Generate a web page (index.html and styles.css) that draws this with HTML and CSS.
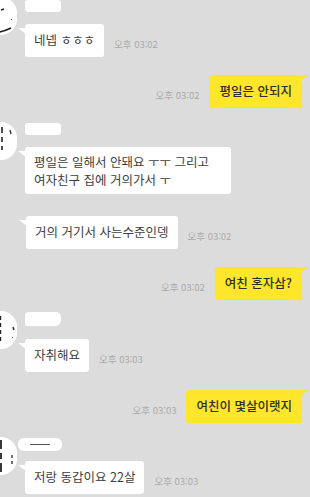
FILE: index.html
```html
<!DOCTYPE html>
<html lang="ko">
<head>
    <meta charset="UTF-8">
    <meta name="viewport" content="width=device-width, initial-scale=1.0">
    <title>채팅</title>
    <link rel="stylesheet" href="styles.css">
</head>
<body>
    <div class="chat">
        <div class="msg group first">
            <div class="avatar">
                <svg viewBox="0 0 36 38" width="36" height="38">
                    <rect x="0" y="0" width="36" height="38" rx="16" fill="#fff"/>
                    <path d="M20 13 l3 -1" stroke="#222" stroke-width="1.6"/>
                    <path d="M30 22 l1 1" stroke="#555" stroke-width="1"/>
                    <path d="M18 35 q6 -1 12 -4" stroke="#222" stroke-width="1.8" fill="none"/>
                </svg>
            </div>
            <div class="body">
                <div class="name"></div>
                <div class="line">
                    <div class="bubble">네넵 ㅎㅎㅎ</div>
                    <span class="time">오후 03:02</span>
                </div>
            </div>
        </div>

        <div class="msg out">
            <div class="line">
                <span class="time">오후 03:02</span>
                <div class="bubble">평일은 안되지</div>
            </div>
        </div>

        <div class="msg group">
            <div class="avatar">
                <svg viewBox="0 0 36 38" width="36" height="38">
                    <rect x="0" y="0" width="36" height="38" rx="16" fill="#fff"/>
                    <path d="M21 5 v6 M21 15 v5 M21 24 v4" stroke="#222" stroke-width="1.6"/>
                    <path d="M29 8 l1 4" stroke="#333" stroke-width="1.4"/>
                </svg>
            </div>
            <div class="body">
                <div class="name"></div>
                <div class="line">
                    <div class="bubble wide">평일은 일해서 안돼요 ㅜㅜ 그리고 여자친구 집에 거의가서 ㅜ</div>
                </div>
            </div>
        </div>

        <div class="msg in cont">
            <div class="line">
                <div class="bubble">거의 거기서 사는수준인뎅</div>
                <span class="time">오후 03:02</span>
            </div>
        </div>

        <div class="msg out">
            <div class="line">
                <span class="time">오후 03:02</span>
                <div class="bubble">여친 혼자삼?</div>
            </div>
        </div>

        <div class="msg group tight">
            <div class="avatar">
                <svg viewBox="0 0 36 38" width="36" height="38">
                    <rect x="0" y="0" width="36" height="38" rx="16" fill="#fff"/>
                    <path d="M19.5 5 v28" stroke="#222" stroke-width="1.4" stroke-dasharray="4 3"/>
                    <path d="M32 16 l1 3" stroke="#333" stroke-width="1.6"/>
                    <path d="M31 26 l1 1" stroke="#666" stroke-width="1"/>
                </svg>
            </div>
            <div class="body">
                <div class="name tall"></div>
                <div class="line">
                    <div class="bubble">자취해요</div>
                    <span class="time">오후 03:03</span>
                </div>
            </div>
        </div>

        <div class="msg out">
            <div class="line">
                <span class="time">오후 03:03</span>
                <div class="bubble">여친이 몇살이랫지</div>
            </div>
        </div>

        <div class="msg group">
            <div class="avatar">
                <svg viewBox="0 0 36 38" width="36" height="38">
                    <rect x="0" y="0" width="36" height="38" rx="16" fill="#fff"/>
                    <path d="M20 3 v9 M20 16 v6 M20 26 v9" stroke="#222" stroke-width="1.8"/>
                    <path d="M31 18 v11" stroke="#333" stroke-width="1.4" stroke-dasharray="3 3"/>
                </svg>
            </div>
            <div class="body">
                <div class="name scribble"></div>
                <div class="line">
                    <div class="bubble">저랑 동갑이요 22살</div>
                    <span class="time">오후 03:03</span>
                </div>
            </div>
        </div>
    </div>
</body>
</html>
```

FILE: styles.css
```css
* {
    margin: 0;
    padding: 0;
    box-sizing: border-box;
}

body {
    font-family: "Noto Sans CJK KR", "Noto Sans", sans-serif;
    background: #dcdcdc;
    color: #3e3e3e;
    overflow: hidden;
    height: 100vh;
}

.chat {
    display: flex;
    flex-direction: column;
    padding-right: 8px;
}

.msg {
    margin-top: 18px;
}

.msg.first {
    margin-top: 0;
}

.msg.cont {
    margin-top: 22px;
}

.msg.tight {
    margin-top: 12px;
}

.msg.group {
    display: flex;
    gap: 8px;
}

.msg.group:not(.first):not(.tight) {
    margin-top: 15px;
}

.msg.in {
    padding-left: 26px;
}

.avatar {
    width: 36px;
    height: 38px;
    margin-left: -19px;
    margin-top: -1px;
    flex-shrink: 0;
}

.avatar svg {
    display: block;
}

.msg.first .avatar {
    margin-top: -3px;
}

.body {
    display: flex;
    flex-direction: column;
}

.name {
    width: 36px;
    height: 12px;
    background: #fff;
    border-radius: 3px;
    margin-bottom: 12px;
}

.name.tall {
    height: 14px;
    margin-bottom: 13px;
    border-radius: 4px 5px 6px 2px;
}

.name.scribble {
    width: 44px;
    height: 13px;
    margin-left: -7px;
    margin-bottom: 10px;
    border-radius: 6px;
    position: relative;
}

.name.scribble::after {
    content: '';
    position: absolute;
    left: 12px;
    top: 6px;
    width: 20px;
    height: 1px;
    background: #555;
}

.line {
    display: flex;
    align-items: flex-end;
    gap: 10px;
}

.msg.out .line {
    justify-content: flex-end;
}

.bubble {
    position: relative;
    background: #fff;
    border-radius: 3px;
    padding: 7px 9px 8px;
    font-size: 12.5px;
    line-height: 18px;
    white-space: nowrap;
}

.bubble.wide {
    white-space: normal;
    word-break: keep-all;
    max-width: 206px;
    padding: 6px 9px 5px;
}

.bubble::before {
    content: '';
    position: absolute;
    top: 4px;
    left: -7px;
    width: 8px;
    height: 6px;
    background: #fff;
    clip-path: polygon(0 0, 100% 0, 100% 100%);
}

.msg.out .bubble {
    background: #fde62c;
    color: #2f2f2a;
    font-weight: 500;
    padding: 7px 10px 8px;
}

.msg.out .bubble::before {
    left: auto;
    right: -6px;
    top: 0;
    background: #fde62c;
    clip-path: polygon(0 0, 100% 0, 0 100%);
}

.time {
    font-size: 9.5px;
    line-height: 12px;
    color: #a9a9a9;
    margin-bottom: 7px;
    white-space: nowrap;
}
```
